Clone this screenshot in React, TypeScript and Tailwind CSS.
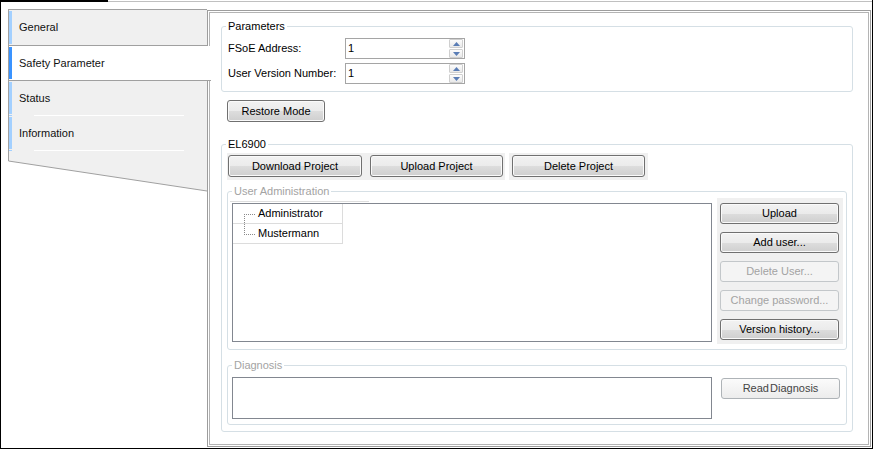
import clsx from "clsx";

const FONT = "font-['Liberation_Sans',Arial,sans-serif]";

function Btn({
  children,
  disabled,
  soft,
  className,
}: {
  children: React.ReactNode;
  disabled?: boolean;
  soft?: boolean;
  className?: string;
}) {
  return (
    <button
      className={clsx(
        "flex items-center justify-center rounded-[3px] border text-[11px] leading-none",
        disabled
          ? "border-[#c3c7ca] bg-[#f4f4f4] text-[#a3a3a3]"
          : soft
          ? "border-[#aeb3b7] bg-[linear-gradient(#fbfbfb,#ececec)] text-[#444]"
          : "border-[#707070] bg-[linear-gradient(#f2f2f2_0%,#ebebeb_50%,#dddddd_51%,#cfcfcf_100%)] text-black shadow-[inset_0_0_0_1px_#fafafa]",
        className
      )}
    >
      {children}
    </button>
  );
}

function Spinner() {
  return (
    <div className="flex flex-col gap-[1px] mr-[1px]">
      {[0, 1].map((i) => (
        <div
          key={i}
          className="w-[14px] h-[9px] border border-[#cfcfcf] rounded-[1px] bg-[linear-gradient(#fcfcfc,#e9e9e9)] flex items-center justify-center"
        >
          <svg width="7" height="4" viewBox="0 0 7 4">
            {i === 0 ? (
              <polygon points="0,4 7,4 3.5,0" fill="#5a7db5" />
            ) : (
              <polygon points="0,0 7,0 3.5,4" fill="#5a7db5" />
            )}
          </svg>
        </div>
      ))}
    </div>
  );
}

function NumField({ label }: { label: string }) {
  return (
    <div className="flex items-center h-[21px]">
      <div className="w-[117px]">{label}</div>
      <div className="w-[120px] h-[21px] border border-[#a5a5a5] flex items-center justify-between pl-[2px]">
        <span>1</span>
        <Spinner />
      </div>
    </div>
  );
}

// groupbox: legend sits on the border, padding lives on the inner wrapper
function Group({
  legend,
  dim,
  className,
  inner,
  children,
}: {
  legend: string;
  dim?: boolean;
  className?: string;
  inner?: string;
  children: React.ReactNode;
}) {
  return (
    <fieldset
      className={clsx("border border-[#d5dfe5] rounded-[3px] min-w-0", className)}
    >
      <legend
        className={clsx(
          "ml-[4px] px-[2px] leading-[14px]",
          dim ? "text-[#a3a3a3]" : "text-black"
        )}
      >
        {legend}
      </legend>
      <div className={inner}>{children}</div>
    </fieldset>
  );
}

function Tab({
  label,
  active,
  first,
  sep,
}: {
  label: string;
  active?: boolean;
  first?: boolean;
  sep?: boolean;
}) {
  return (
    <div
      className={clsx(
        active ? "relative z-10 w-[202px] bg-white" : "w-full",
        (first || active) && "border-b border-[#a0a0a0]"
      )}
    >
      <div className={clsx("flex", first ? "h-[35px]" : "h-[34px]")}>
        <div
          className={clsx(
            "w-[3px] my-[1px]",
            active ? "bg-[#3a93ff]" : "bg-[#a3d0ff]"
          )}
        />
        <div className="flex items-center pl-[7px] text-[#111]">{label}</div>
      </div>
      {sep && (
        <div className="flex h-[1px]">
          <div className="w-[3px] bg-[#a3d0ff]" />
          <div className="ml-[22px] w-[150px] bg-white" />
        </div>
      )}
    </div>
  );
}

function Tabs() {
  return (
    <div className="w-[199px] shrink-0 flex flex-col">
      <div className="border-t border-l border-[#a0a0a0] bg-[#f0f0f0] flex flex-col">
        <Tab label="General" first />
        <Tab label="Safety Parameter" active />
        <Tab label="Status" sep />
        <Tab label="Information" sep />
      </div>
      <svg width="199" height="41" viewBox="0 0 199 41" className="block">
        <polygon points="0,0 199,0 199,40 0,10" fill="#f0f0f0" />
        <polyline
          points="0.5,0 0.5,10 199,40"
          fill="none"
          stroke="#a0a0a0"
          strokeWidth="1"
        />
      </svg>
    </div>
  );
}

function TreeRow({ name, last }: { name: string; last?: boolean }) {
  return (
    <div className="flex items-center h-[20px] w-[110px] border-r border-b border-[#dcdcdc]">
      <svg width="25" height="20" viewBox="0 0 25 20" className="shrink-0">
        <line
          x1="11.5"
          y1={last ? 0 : 10}
          x2="11.5"
          y2={last ? 10 : 20}
          stroke="#8a8a8a"
          strokeDasharray="1 1"
        />
        <line x1="11" y1="10.5" x2="23" y2="10.5" stroke="#8a8a8a" strokeDasharray="1 1" />
      </svg>
      <span>{name}</span>
    </div>
  );
}

function Panel() {
  return (
    <div className="flex-1 mt-[1px] border border-[#9d9d9d] p-[1px] flex">
      <div className="flex-1 border border-[#b4b4b4] pl-[11px] pr-[15px] pt-[6px] flex flex-col">
        <Group legend="Parameters" inner="pl-[6px] pb-[7px]">
          <div className="mt-[5px] flex flex-col gap-[4px]">
            <NumField label="FSoE Address:" />
            <NumField label="User Version Number:" />
          </div>
        </Group>

        <Btn className="mt-[8px] ml-[6px] w-[98px] h-[22px]">Restore Mode</Btn>

        <Group legend="EL6900" className="mt-[15px]" inner="px-[5px] pb-[6px]">
          <div className="mt-[2px] flex gap-[4px]">
            <div className="bg-[#f0f0f0] flex gap-[8px] pl-[1px] pr-[2px] pt-[2px] pb-[3px]">
              <Btn className="w-[134px] h-[22px]">Download Project</Btn>
              <Btn className="w-[133px] h-[22px]">Upload Project</Btn>
            </div>
            <div className="bg-[#f0f0f0] flex px-[3px] pt-[2px] pb-[3px]">
              <Btn className="w-[133px] h-[22px]">Delete Project</Btn>
            </div>
          </div>

          <Group
            legend="User Administration"
            dim
            className="mt-[4px]"
            inner="pl-[4px] pr-[3px] pb-[5px]"
          >
            <div className="flex gap-[5px]">
              <div className="flex flex-col pt-[3px]">
                <div className="h-[1px] w-[139px] -ml-[2px] bg-[#dedede] mb-[1px]" />
                <div className="w-[480px] h-[139px] border border-[#828790] bg-white">
                  <TreeRow name="Administrator" />
                  <TreeRow name="Mustermann" last />
                </div>
              </div>
              <div className="w-[126px] bg-[#f0f0f0] px-[3px] pt-[5px] pb-[4px] flex flex-col gap-[8px]">
                <Btn className="w-[119px] h-[21px]">Upload</Btn>
                <Btn className="w-[119px] h-[21px]">Add user...</Btn>
                <Btn disabled className="w-[119px] h-[21px]">
                  Delete User...
                </Btn>
                <Btn disabled className="w-[119px] h-[21px]">
                  Change password...
                </Btn>
                <Btn className="w-[119px] h-[21px]">Version history...</Btn>
              </div>
            </div>
          </Group>

          <Group
            legend="Diagnosis"
            dim
            className="mt-[8px]"
            inner="pl-[4px] pr-[3px] pb-[5px]"
          >
            <div className="flex gap-[9px] mt-[5px]">
              <div className="w-[480px] h-[42px] border border-[#828790] bg-white" />
              <Btn soft className="w-[119px] h-[21px] mt-[1px] [word-spacing:-2px]">
                Read Diagnosis
              </Btn>
            </div>
          </Group>
        </Group>
      </div>
    </div>
  );
}

export default function App() {
  return (
    <div
      className={clsx(
        "w-[873px] h-[449px] bg-white border-x border-b border-black flex flex-col text-[11px] text-black overflow-hidden",
        FONT
      )}
    >
      <div className="flex h-[2px] shrink-0">
        <div className="w-[107px] bg-black" />
        <div className="flex-1 border-b border-[#c0c0c0]" />
      </div>
      <div className="flex flex-1 min-h-0 pt-[7px] pl-[7px] pr-[1px] pb-[1px]">
        <Tabs />
        <Panel />
      </div>
    </div>
  );
}
